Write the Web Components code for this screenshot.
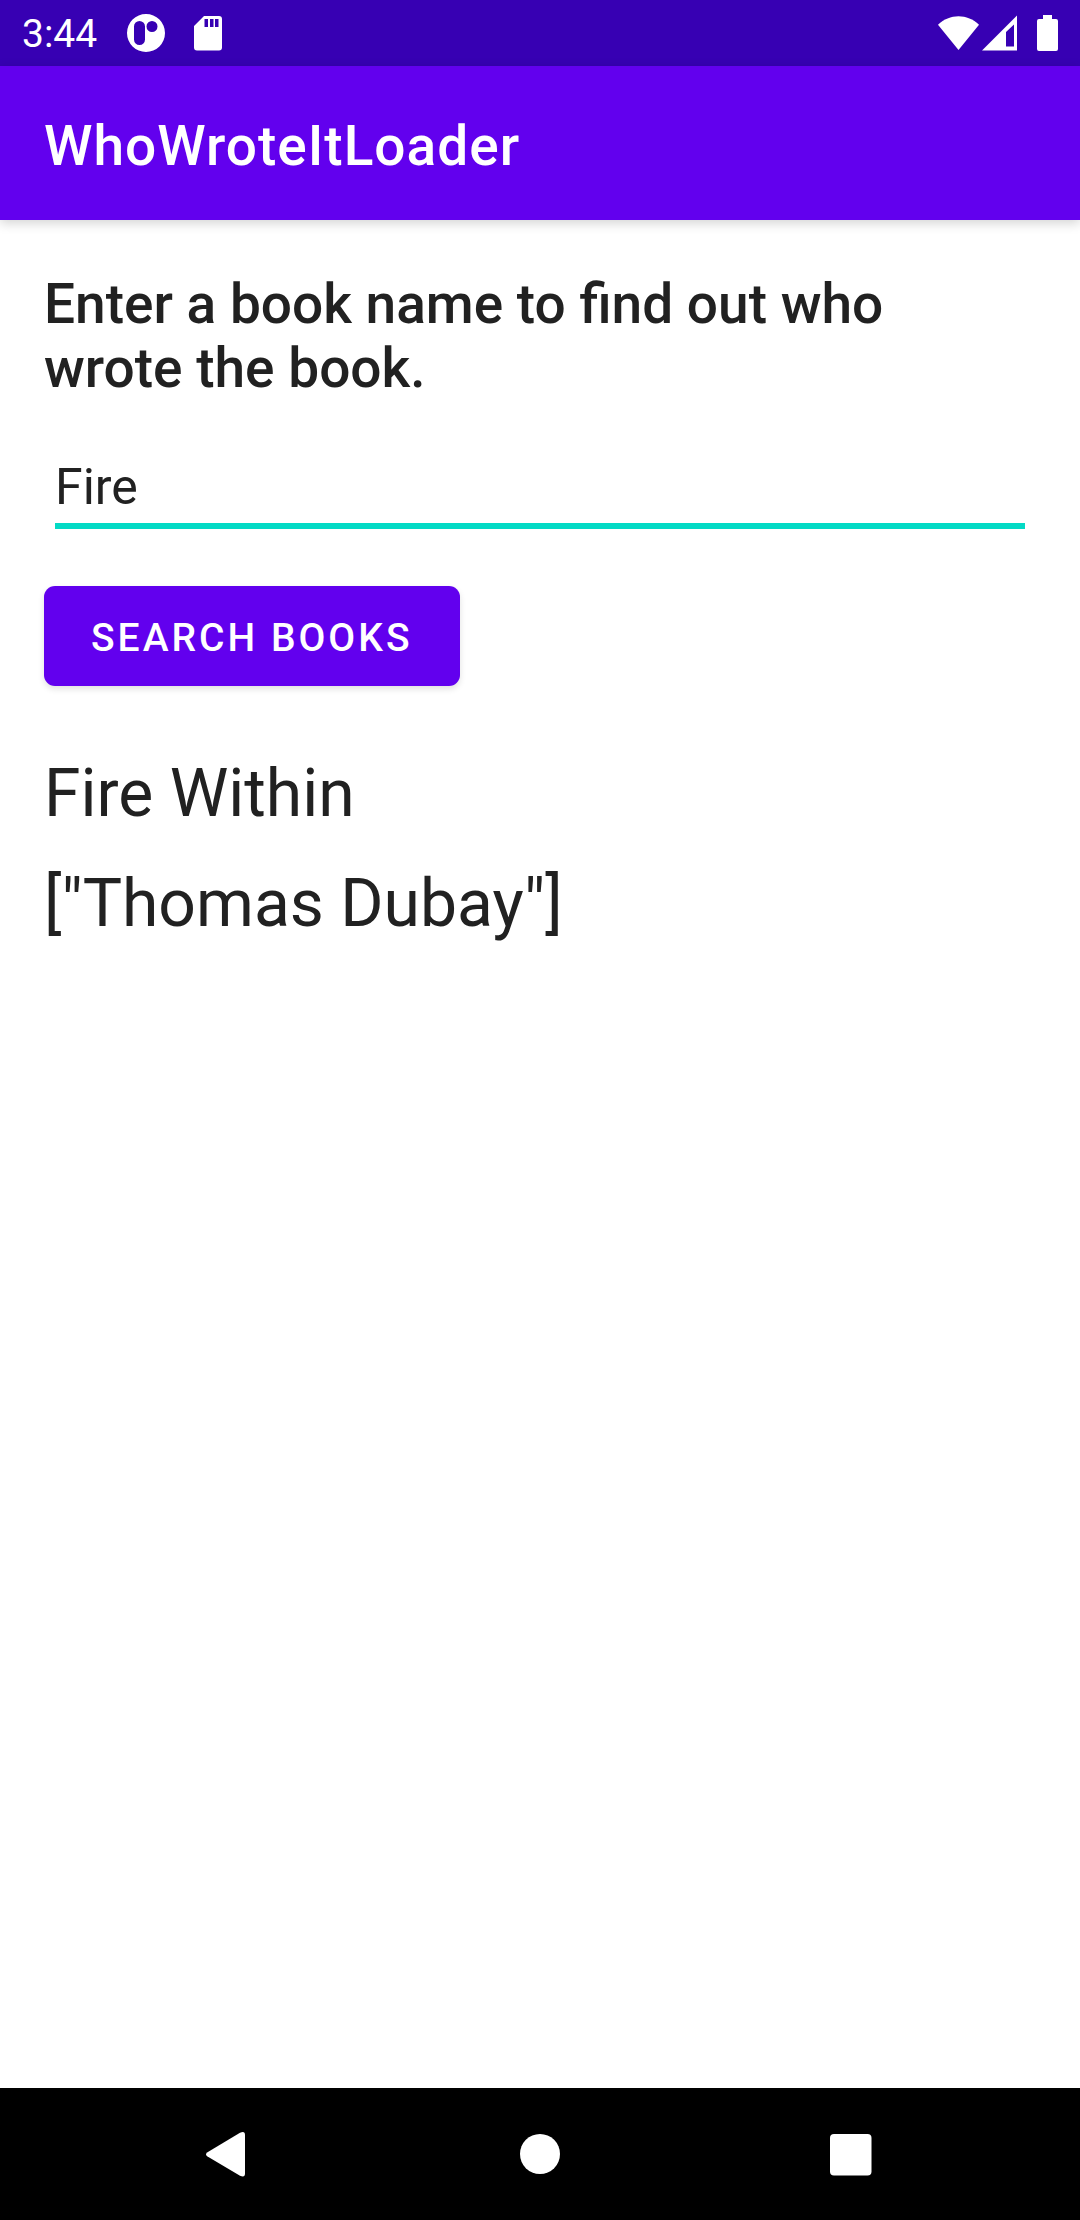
<!DOCTYPE html>
<html lang="en">
<head>
<meta charset="utf-8">
<meta name="viewport" content="width=device-width, initial-scale=1">
<title>WhoWroteItLoader</title>
<style>
  html, body { margin: 0; background: #fff; }
  body {
    font-family: Roboto, "Noto Sans", sans-serif;
    color: #212121;
    --primary: #6200ee;
    --primary-dark: #3700b3;
    --accent: #03dac5;
    --gutter: 44px;
  }
</style>
</head>
<body>
<book-app>
  <status-bar slot="status">3:44</status-bar>
  <app-bar slot="bar">WhoWroteItLoader</app-bar>
  <book-search value="Fire">
    Enter a book name to find out who wrote the book.
    <span slot="action">SEARCH BOOKS</span>
  </book-search>
  <book-result>
    <span slot="title">Fire Within</span>
    <span slot="authors">["Thomas Dubay"]</span>
  </book-result>
  <nav-bar slot="nav"></nav-bar>
</book-app>

<script>
const define = (name, html) => {
  const template = document.createElement('template');
  template.innerHTML = html;
  customElements.define(name, class extends HTMLElement {
    constructor() {
      super();
      this.attachShadow({ mode: 'open' }).append(template.content.cloneNode(true));
    }
    connectedCallback() {
      const input = this.shadowRoot.querySelector('input');
      if (input) input.value = this.getAttribute('value') || '';
    }
  });
};

define('book-app', `
  <style>
    :host { display: flex; flex-direction: column; min-height: 100vh; }
    main { flex: 1; padding: 52px var(--gutter); }
  </style>
  <slot name="status"></slot>
  <slot name="bar"></slot>
  <main><slot></slot></main>
  <slot name="nav"></slot>
`);

define('status-bar', `
  <style>
    :host { display: flex; align-items: center; justify-content: space-between; height: 66px;
            padding: 0 22px; background: var(--primary-dark); color: #fff; }
    .group { display: flex; align-items: center; }
    .left { gap: 28px; }
    time { padding: 2px 1px 0 0; font-size: 39px; line-height: 46px; }
    svg { display: block; fill: #fff; }
    .battery { margin-left: 20px; }
    .signal { margin-left: 3px; }
  </style>
  <div class="group left">
    <time><slot></slot></time>
    <svg width="40" height="40" viewBox="0 0 40 40" aria-hidden="true">
      <path fill-rule="evenodd" d="M20 1a19 19 0 1 1 0 38a19 19 0 1 1 0-38zM13.500 8A5.500 5.500 0 0 0 8 13.500v13a5.500 5.500 0 0 0 11 0v-13A5.500 5.500 0 0 0 13.500 8zM26 8a5.500 5.500 0 1 0 0 11a5.500 5.500 0 1 0 0-11z"/>
    </svg>
    <svg width="28" height="36" viewBox="0 0 28 36" aria-hidden="true">
      <path fill-rule="evenodd" d="M10 1h15a3 3 0 0 1 3 3v28.500a3 3 0 0 1-3 3H3a3 3 0 0 1-3-3V11zM10.500 4v8H14V4zM16 4v8h3.500V4zM21 4v8h3.500V4z"/>
    </svg>
  </div>
  <div class="group">
    <svg width="41" height="36" viewBox="0 0 41 36" aria-hidden="true">
      <path d="M0 9.800C11.500-1.600 29.500-1.600 41 9.800L20.500 35z"/>
    </svg>
    <svg class="signal" width="35" height="36" viewBox="0 0 35 36" aria-hidden="true">
      <path fill-rule="evenodd" d="M35 .500V35.500H0zM32 9.500L24 17V31.500H32z"/>
    </svg>
    <svg class="battery" width="21" height="36" viewBox="0 0 21 36" aria-hidden="true">
      <path d="M6 0h9v4h4a2 2 0 0 1 2 2v28a2 2 0 0 1-2 2H2a2 2 0 0 1-2-2V6a2 2 0 0 1 2-2h4z"/>
    </svg>
  </div>
`);

define('app-bar', `
  <style>
    :host { display: flex; align-items: center; height: 154px; padding: 0 var(--gutter);
            background: var(--primary); color: #fff; box-shadow: 0 3px 11px rgba(0,0,0,.18); }
    h1 { margin: 0; padding-top: 6px; font-size: 55px; line-height: 64px; font-weight: 500; letter-spacing: 1px; }
  </style>
  <h1><slot></slot></h1>
`);

define('book-search', `
  <style>
    :host { display: block; }
    form { display: flex; flex-direction: column; align-items: flex-start; }
    label { padding-right: 11px; font-size: 55px; line-height: 64px; font-weight: 500; }
    input { box-sizing: border-box; align-self: stretch; margin: 56px 11px 0; padding: 2px 0 7px;
            height: 73px; border: 0; border-bottom: 6px solid var(--accent); border-radius: 0;
            outline: 0; background: none; color: inherit; font: 50px/58px Roboto, "Noto Sans", sans-serif; }
    button { height: 100px; margin: 57px 0 0; padding: 4px 47px 0; border: 0; border-radius: 11px;
             background: var(--primary); color: #fff; box-shadow: 0 3px 6px rgba(0,0,0,.12);
             font: 500 39px/46px Roboto, "Noto Sans", sans-serif; letter-spacing: 3px; }
  </style>
  <form onsubmit="return false">
    <label for="query"><slot></slot></label>
    <input id="query" type="text" autocomplete="off" spellcheck="false">
    <button type="submit"><slot name="action"></slot></button>
  </form>
`);

define('book-result', `
  <style>
    :host { display: flex; flex-direction: column; gap: 32px; margin-top: 69px; }
    p { margin: 0; font-size: 66px; line-height: 78px; }
  </style>
  <p><slot name="title"></slot></p>
  <p><slot name="authors"></slot></p>
`);

define('nav-bar', `
  <style>
    :host { display: flex; justify-content: center; height: 132px; background: #000; }
    nav { display: flex; gap: 90px; }
    button { display: flex; align-items: center; justify-content: center; width: 220px; padding: 0;
             border: 0; background: none; }
    svg { fill: #fff; }
  </style>
  <nav aria-label="System">
    <button type="button" aria-label="Back">
      <svg width="48" height="48" viewBox="0 0 48 48"><path d="M1.500 22.300L34 2.800Q39 .500 39 5V43.500Q39 48 34 45.700L1.500 26.500Q-1.500 24.500 1.500 22.300z"/></svg>
    </button>
    <button type="button" aria-label="Home">
      <svg width="48" height="48" viewBox="0 0 48 48"><circle cx="24" cy="24" r="20"/></svg>
    </button>
    <button type="button" aria-label="Overview">
      <svg width="48" height="48" viewBox="0 0 48 48"><rect x="4" y="4" width="41.500" height="41.500" rx="4"/></svg>
    </button>
  </nav>
`);
</script>
</body>
</html>
